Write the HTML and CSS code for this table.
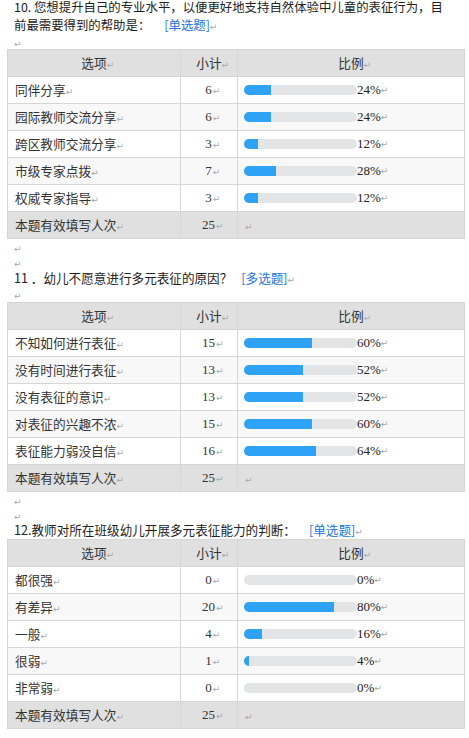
FILE: index.html
```html
<!DOCTYPE html>
<html lang="zh-CN">
<head>
<meta charset="utf-8">
<title>调查结果</title>
<link rel="stylesheet" href="styles.css">
</head>
<body>
<div class="doc">
  <p class="q q-first">10. 您想提升自己的专业水平，以便更好地支持自然体验中儿童的表征行为，目<br>前最需要得到的帮助是：<span class="tag tag-a">[单选题]</span><span class="pm">↵</span></p>
  <p class="blank"><span class="pm">↵</span></p>
  <table class="grid">
    <colgroup><col class="c1"><col class="c2"><col class="c3"></colgroup>
    <thead>
      <tr><th>选项<span class="pm">↵</span></th><th>小计<span class="pm">↵</span></th><th>比例<span class="pm">↵</span></th></tr>
    </thead>
    <tbody>
      <tr><td class="opt">同伴分享<span class="pm">↵</span></td><td class="num">6<span class="pm">↵</span></td><td><div class="ratio"><span class="bar"><span class="fill" style="width:24%"></span></span><span class="pct">24%</span><span class="pm">↵</span></div></td></tr>
      <tr><td class="opt">园际教师交流分享<span class="pm">↵</span></td><td class="num">6<span class="pm">↵</span></td><td><div class="ratio"><span class="bar"><span class="fill" style="width:24%"></span></span><span class="pct">24%</span><span class="pm">↵</span></div></td></tr>
      <tr><td class="opt">跨区教师交流分享<span class="pm">↵</span></td><td class="num">3<span class="pm">↵</span></td><td><div class="ratio"><span class="bar"><span class="fill" style="width:12%"></span></span><span class="pct">12%</span><span class="pm">↵</span></div></td></tr>
      <tr><td class="opt">市级专家点拨<span class="pm">↵</span></td><td class="num">7<span class="pm">↵</span></td><td><div class="ratio"><span class="bar"><span class="fill" style="width:28%"></span></span><span class="pct">28%</span><span class="pm">↵</span></div></td></tr>
      <tr><td class="opt">权威专家指导<span class="pm">↵</span></td><td class="num">3<span class="pm">↵</span></td><td><div class="ratio"><span class="bar"><span class="fill" style="width:12%"></span></span><span class="pct">12%</span><span class="pm">↵</span></div></td></tr>
    </tbody>
    <tfoot>
      <tr><td class="opt">本题有效填写人次<span class="pm">↵</span></td><td class="num">25<span class="pm">↵</span></td><td class="empty"><span class="pm">↵</span></td></tr>
    </tfoot>
  </table>
  <p class="blank"><span class="pm">↵</span></p>
  <p class="blank"><span class="pm">↵</span></p>
  <p class="q q-line">11 ．幼儿不愿意进行多元表征的原因？<span class="tag tag-b">[多选题]</span><span class="pm">↵</span></p>
  <p class="blank blank-before"><span class="pm">↵</span></p>
  <table class="grid">
    <colgroup><col class="c1"><col class="c2"><col class="c3"></colgroup>
    <thead>
      <tr><th>选项<span class="pm">↵</span></th><th>小计<span class="pm">↵</span></th><th>比例<span class="pm">↵</span></th></tr>
    </thead>
    <tbody>
      <tr><td class="opt">不知如何进行表征<span class="pm">↵</span></td><td class="num">15<span class="pm">↵</span></td><td><div class="ratio"><span class="bar"><span class="fill" style="width:60%"></span></span><span class="pct">60%</span><span class="pm">↵</span></div></td></tr>
      <tr><td class="opt">没有时间进行表征<span class="pm">↵</span></td><td class="num">13<span class="pm">↵</span></td><td><div class="ratio"><span class="bar"><span class="fill" style="width:52%"></span></span><span class="pct">52%</span><span class="pm">↵</span></div></td></tr>
      <tr><td class="opt">没有表征的意识<span class="pm">↵</span></td><td class="num">13<span class="pm">↵</span></td><td><div class="ratio"><span class="bar"><span class="fill" style="width:52%"></span></span><span class="pct">52%</span><span class="pm">↵</span></div></td></tr>
      <tr><td class="opt">对表征的兴趣不浓<span class="pm">↵</span></td><td class="num">15<span class="pm">↵</span></td><td><div class="ratio"><span class="bar"><span class="fill" style="width:60%"></span></span><span class="pct">60%</span><span class="pm">↵</span></div></td></tr>
      <tr><td class="opt">表征能力弱没自信<span class="pm">↵</span></td><td class="num">16<span class="pm">↵</span></td><td><div class="ratio"><span class="bar"><span class="fill" style="width:64%"></span></span><span class="pct">64%</span><span class="pm">↵</span></div></td></tr>
    </tbody>
    <tfoot>
      <tr><td class="opt">本题有效填写人次<span class="pm">↵</span></td><td class="num">25<span class="pm">↵</span></td><td class="empty"><span class="pm">↵</span></td></tr>
    </tfoot>
  </table>
  <p class="blank"><span class="pm">↵</span></p>
  <p class="blank"><span class="pm">↵</span></p>
  <p class="q q-line q-last">12.教师对所在班级幼儿开展多元表征能力的判断：<span class="tag tag-c">[单选题]</span><span class="pm">↵</span></p>
  <table class="grid">
    <colgroup><col class="c1"><col class="c2"><col class="c3"></colgroup>
    <thead>
      <tr><th>选项<span class="pm">↵</span></th><th>小计<span class="pm">↵</span></th><th>比例<span class="pm">↵</span></th></tr>
    </thead>
    <tbody>
      <tr><td class="opt">都很强<span class="pm">↵</span></td><td class="num">0<span class="pm">↵</span></td><td><div class="ratio"><span class="bar"><span class="fill" style="width:0%"></span></span><span class="pct">0%</span><span class="pm">↵</span></div></td></tr>
      <tr><td class="opt">有差异<span class="pm">↵</span></td><td class="num">20<span class="pm">↵</span></td><td><div class="ratio"><span class="bar"><span class="fill" style="width:80%"></span></span><span class="pct">80%</span><span class="pm">↵</span></div></td></tr>
      <tr><td class="opt">一般<span class="pm">↵</span></td><td class="num">4<span class="pm">↵</span></td><td><div class="ratio"><span class="bar"><span class="fill" style="width:16%"></span></span><span class="pct">16%</span><span class="pm">↵</span></div></td></tr>
      <tr><td class="opt">很弱<span class="pm">↵</span></td><td class="num">1<span class="pm">↵</span></td><td><div class="ratio"><span class="bar"><span class="fill" style="width:4%"></span></span><span class="pct">4%</span><span class="pm">↵</span></div></td></tr>
      <tr><td class="opt">非常弱<span class="pm">↵</span></td><td class="num">0<span class="pm">↵</span></td><td><div class="ratio"><span class="bar"><span class="fill" style="width:0%"></span></span><span class="pct">0%</span><span class="pm">↵</span></div></td></tr>
    </tbody>
    <tfoot>
      <tr><td class="opt">本题有效填写人次<span class="pm">↵</span></td><td class="num">25<span class="pm">↵</span></td><td class="empty"><span class="pm">↵</span></td></tr>
    </tfoot>
  </table>
</div>
</body>
</html>
```
FILE: styles.css
```css
html, body {
  margin: 0;
  padding: 0;
  background: #ffffff;
}

body {
  font-family: "Noto Sans CJK SC", "Noto Sans", sans-serif;
  font-size: 12.7px;
  color: #222222;
}

.doc {
  padding: 0 5px 0 7px;
}

.q {
  margin: 0;
  padding-left: 7px;
  white-space: nowrap;
  font-size: 12.6px;
}

.q-first {
  margin-top: -2px;
  height: 36px;
  line-height: 18px;
  font-size: 12.4px;
}

.q-line {
  height: 17px;
  line-height: 17px;
}

.q-last {
  height: 16px;
  line-height: 16px;
  margin-bottom: 1px;
}

.tag {
  color: #2474e0;
}

.tag-a { margin-left: 14px; }
.tag-b { margin-left: 9px; }
.tag-c { margin-left: 13px; }

.blank {
  margin: 0;
  padding-left: 7px;
  height: 15px;
  line-height: 15px;
  overflow: hidden;
}

.blank-before {
  margin-bottom: 1px;
}

.pm {
  display: inline-block;
  width: 0;
  overflow: visible;
  white-space: nowrap;
  font-family: "DejaVu Sans", sans-serif;
  font-size: 9px;
  line-height: 9px;
  color: #a8a8a8;
  vertical-align: baseline;
}

.blank .pm {
  width: auto;
}

.grid {
  width: 457px;
  border-collapse: collapse;
  table-layout: fixed;
  color: #333333;
}

.c1 { width: 173px; }
.c2 { width: 57px; }
.c3 { width: 227px; }

.grid tr {
  height: 27px;
}

.grid th,
.grid td {
  border: 1px solid #d6d6d6;
  padding: 0;
  font-size: 12.7px;
  line-height: 16px;
  vertical-align: middle;
  white-space: nowrap;
}

.grid th {
  font-weight: normal;
  text-align: center;
  background: #e0e0e0;
  color: #333333;
}

.grid tbody tr:nth-child(even) td {
  background: #f8f8f8;
}

.grid tfoot td {
  background: #e0e0e0;
}

.opt {
  padding-left: 7px !important;
  text-align: left;
}

.num {
  text-align: center;
  font-family: "Liberation Serif", "Times New Roman", serif;
  font-size: 13px !important;
}

.num .pm {
  margin-left: 1px;
}

.empty {
  padding-left: 7px !important;
}

.ratio {
  display: flex;
  align-items: center;
  padding-left: 6px;
}

.bar {
  display: block;
  width: 113px;
  height: 10px;
  border-radius: 5px;
  background: #e3e4e6;
  overflow: hidden;
  flex: none;
}

.fill {
  display: block;
  height: 100%;
  background: #2ea3f5;
}

.pct {
  font-family: "Liberation Serif", "Times New Roman", serif;
  font-size: 13px;
  color: #222222;
}
```
